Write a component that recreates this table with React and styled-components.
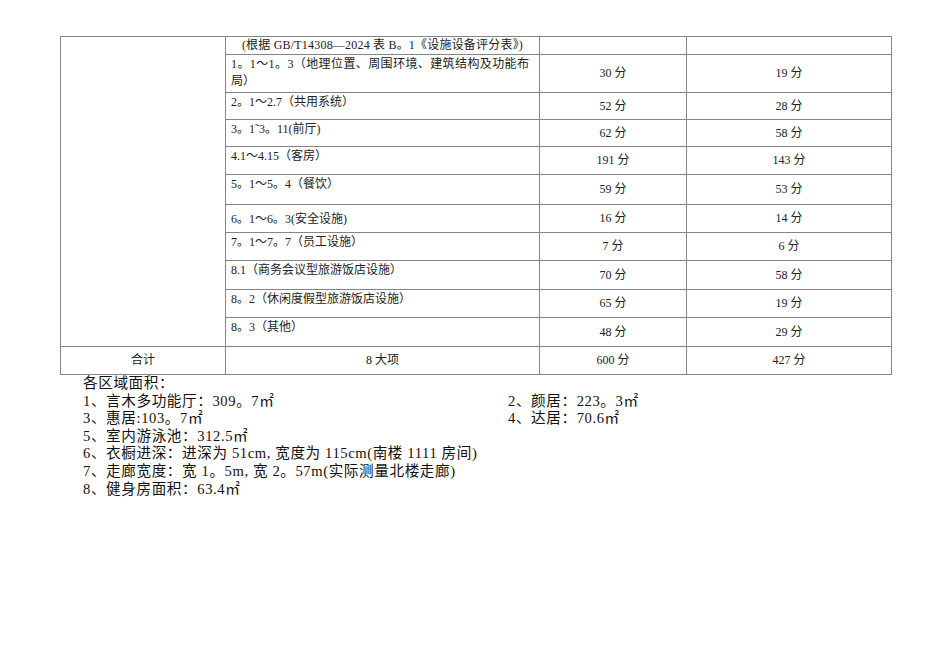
import React from 'react';
import styled, { createGlobalStyle } from 'styled-components';

const GlobalStyle = createGlobalStyle`
  html, body {
    margin: 0;
    padding: 0;
    background: #ffffff;
  }
  body {
    font-family: 'Liberation Serif', 'Noto Sans CJK SC', serif;
    color: #111;
  }
`;

const Page = styled.div`
  width: 950px;
  min-height: 672px;
  padding: 36px 0 0 60px;
  box-sizing: border-box;
`;

const ScoreTable = styled.table`
  width: 831px;
  border-collapse: collapse;
  table-layout: fixed;
  font-size: 12px;
  color: #222;
`;

const Col = styled.col`
  width: ${(p) => p.$w}px;
`;

const Cell = styled.td`
  border: 1px solid #858585;
  padding: ${(p) => (p.$center ? '0 4px' : '1px 10px 0 5px')};
  height: ${(p) => p.$h || 27}px;
  box-sizing: border-box;
  text-align: ${(p) => (p.$center ? 'center' : 'justify')};
  vertical-align: ${(p) => p.$valign || 'middle'};
  line-height: 17px;
`;

const HeaderText = styled.span`
  font-size: 12px;
  letter-spacing: 0.2px;
`;

const Notes = styled.div`
  padding: 0 0 0 23px;
  font-size: 14.6px;
  line-height: 17.6px;
  letter-spacing: 0.6px;
  color: #111;
`;

const NoteLine = styled.div`
  display: grid;
  grid-template-columns: 425px auto;
  white-space: nowrap;
`;

const NoteItem = styled.span`
  padding-left: ${(p) => p.$shift || 0}px;
`;

const rows = [
  { label: '1。1～1。3（地理位置、周围环境、建筑结构及功能布局）', full: '30 分', got: '19 分', h: 38 },
  { label: '2。1～2.7（共用系统）', full: '52 分', got: '28 分', h: 27 },
  { label: '3。1˜3。11(前厅)', full: '62 分', got: '58 分', h: 27 },
  { label: '4.1～4.15（客房）', full: '191 分', got: '143 分', h: 28 },
  { label: '5。1～5。4（餐饮）', full: '59 分', got: '53 分', h: 30 },
  { label: '6。1～6。3(安全设施)', full: '16 分', got: '14 分', h: 28, mid: true },
  { label: '7。1～7。7（员工设施）', full: '7 分', got: '6 分', h: 28 },
  { label: '8.1（商务会议型旅游饭店设施）', full: '70 分', got: '58 分', h: 29 },
  { label: '8。2（休闲度假型旅游饭店设施）', full: '65 分', got: '19 分', h: 28 },
  { label: '8。3（其他）', full: '48 分', got: '29 分', h: 29 },
];

const notes = [
  ['各区域面积：'],
  ['1、言木多功能厅：309。7㎡', '2、颜居：223。3㎡', 0],
  ['3、惠居:103。7㎡', '4、达居：70.6㎡', -3],
  ['5、室内游泳池：312.5㎡'],
  ['6、衣橱进深：进深为 51cm, 宽度为 115cm(南楼 1111 房间)'],
  ['7、走廊宽度：宽 1。5m, 宽 2。57m(实际测量北楼走廊)'],
  ['8、健身房面积：63.4㎡'],
];

export default function App() {
  return (
    <Page>
      <GlobalStyle />
      <ScoreTable>
        <colgroup>
          <Col $w={165} />
          <Col $w={314} />
          <Col $w={147} />
          <Col $w={205} />
        </colgroup>
        <tbody>
          <tr>
            <Cell rowSpan={rows.length + 1} />
            <Cell $center $h={18}>
              <HeaderText>(根据 GB/T14308—2024 表 B。1《设施设备评分表》)</HeaderText>
            </Cell>
            <Cell $center $h={18} />
            <Cell $center $h={18} />
          </tr>
          {rows.map((r) => (
            <tr key={r.label}>
              <Cell $h={r.h} $valign={r.mid ? 'middle' : 'top'}>
                {r.label}
              </Cell>
              <Cell $center $h={r.h}>{r.full}</Cell>
              <Cell $center $h={r.h}>{r.got}</Cell>
            </tr>
          ))}
          <tr>
            <Cell $center $h={28}>合计</Cell>
            <Cell $center $h={28}>8 大项</Cell>
            <Cell $center $h={28}>600 分</Cell>
            <Cell $center $h={28}>427 分</Cell>
          </tr>
        </tbody>
      </ScoreTable>
      <Notes>
        {notes.map(([left, right, shift]) => (
          <NoteLine key={left}>
            <NoteItem>{left}</NoteItem>
            {right && <NoteItem $shift={shift}>{right}</NoteItem>}
          </NoteLine>
        ))}
      </Notes>
    </Page>
  );
}
